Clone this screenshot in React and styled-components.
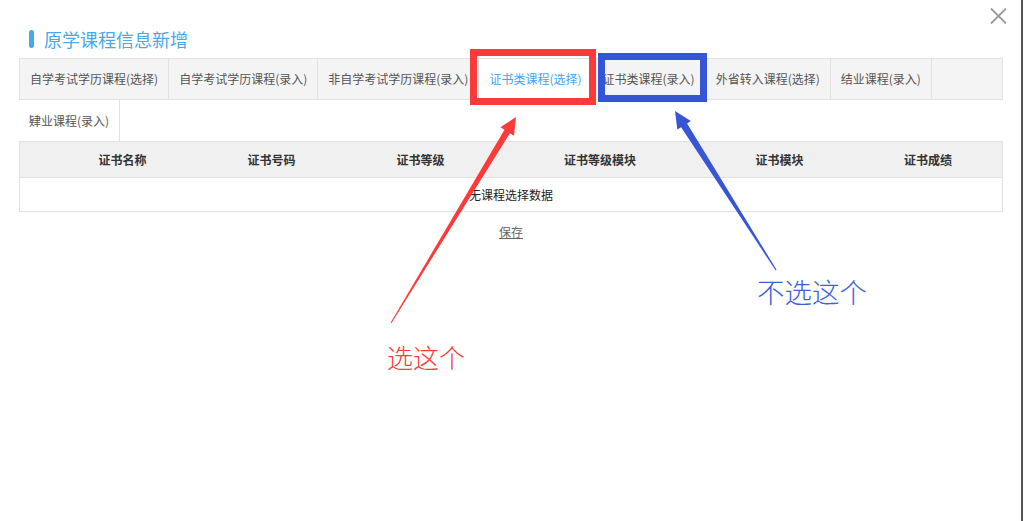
import React from "react";
import styled, { createGlobalStyle } from "styled-components";

const Global = createGlobalStyle`
  html, body { margin: 0; padding: 0; background: #fff; overflow: hidden; }
  body { font-family: "Microsoft YaHei", "Noto Sans CJK SC", "Noto Sans", sans-serif; }
  * { box-sizing: border-box; }
`;

const Frame = styled.div`
  position: relative;
  width: 1023px;
  height: 521px;
  border-right: 2px solid #555;
  padding: 28px 18px 0 19px;
  background: #fff;
`;

const Close = styled.button`
  position: absolute;
  top: 7px;
  right: 14px;
  width: 18px;
  height: 18px;
  padding: 0;
  border: 0;
  background: none;
  display: flex;
  align-items: center;
  justify-content: center;
`;

const Title = styled.h2`
  display: flex;
  align-items: center;
  gap: 10px;
  margin: 0 0 8px 10px;
  height: 22px;
  font-size: 18px;
  line-height: 22px;
  font-weight: 400;
  color: #4aa8e8;
  &::before {
    content: "";
    width: 5px;
    height: 18px;
    border-radius: 3px;
    background: #4aa8e8;
  }
`;

const TabStrip = styled.ul`
  display: flex;
  margin: 0;
  padding: 0;
  list-style: none;
  height: ${(p) => (p.$strip ? "42px" : "41px")};
  background: ${(p) => (p.$strip ? "#f4f4f4" : "#fff")};
  border: ${(p) => (p.$strip ? "1px solid #e2e2e2" : "0")};
`;

const Tab = styled.li`
  height: ${(p) => (p.$tall ? "41px" : "40px")};
  line-height: ${(p) => (p.$tall ? "41px" : "40px")};
  padding: 0 10px;
  font-size: 12px;
  white-space: nowrap;
  color: ${(p) => (p.$active ? "#3fa6f0" : "#555")};
  background: ${(p) => (p.$active ? "#fff" : "transparent")};
  border-right: 1px solid #e2e2e2;
`;

const Table = styled.div`
  border: 1px solid #e2e2e2;
  font-size: 12px;
  color: #333;
`;

const HeadRow = styled.div`
  display: grid;
  grid-template-columns: 28px 149px 149px 149px 210px 149px 1fr;
  height: 36px;
  background: #f0f0f0;
  border-bottom: 1px solid #e2e2e2;
`;

const HeadCell = styled.div`
  display: flex;
  align-items: center;
  justify-content: center;
  font-weight: 700;
  color: #333;
`;

const EmptyRow = styled.div`
  height: 33px;
  line-height: 33px;
  text-align: center;
  color: #222;
`;

const SaveLink = styled.a`
  display: block;
  width: fit-content;
  margin: 12px auto 0;
  font-size: 12px;
  line-height: 15px;
  color: #666;
  text-decoration: underline;
`;

const MarkBox = styled.div`
  position: absolute;
  left: ${(p) => p.$x}px;
  top: ${(p) => p.$y}px;
  width: ${(p) => p.$w}px;
  height: ${(p) => p.$h}px;
  border: 7px solid ${(p) => p.$c};
  pointer-events: none;
`;

const Note = styled.div`
  position: absolute;
  left: ${(p) => p.$x}px;
  top: ${(p) => p.$y}px;
  font-size: ${(p) => p.$s}px;
  line-height: 1;
  font-weight: 300;
  color: ${(p) => p.$c};
  white-space: nowrap;
`;

const Overlay = styled.svg`
  position: absolute;
  left: 0;
  top: 0;
  pointer-events: none;
`;

const tabs = [
  "自学考试学历课程(选择)",
  "自学考试学历课程(录入)",
  "非自学考试学历课程(录入)",
  "证书类课程(选择)",
  "证书类课程(录入)",
  "外省转入课程(选择)",
  "结业课程(录入)",
];

const cols = ["", "证书名称", "证书号码", "证书等级", "证书等级模块", "证书模块", "证书成绩"];

export default function App() {
  return (
    <>
      <Global />
      <Frame>
        <Close aria-label="关闭">
          <svg width="17" height="16" viewBox="0 0 17 16">
            <path d="M1 0.5 L16 15.5 M16 0.5 L1 15.5" stroke="#9a9a9a" strokeWidth="1.8" fill="none" />
          </svg>
        </Close>
        <Title>原学课程信息新增</Title>
        <TabStrip $strip>
          {tabs.map((t, i) => (
            <Tab key={t} $active={i === 3}>
              {t}
            </Tab>
          ))}
        </TabStrip>
        <TabStrip>
          <Tab $tall>肄业课程(录入)</Tab>
        </TabStrip>
        <Table>
          <HeadRow>
            {cols.map((c, i) => (
              <HeadCell key={i}>{c}</HeadCell>
            ))}
          </HeadRow>
          <EmptyRow>无课程选择数据</EmptyRow>
        </Table>
        <SaveLink>保存</SaveLink>

        <MarkBox $x={470} $y={49} $w={126} $h={56} $c="#fc3a3a" />
        <MarkBox $x={598} $y={53} $w={109} $h={49} $c="#3554d6" />
        <Overlay width="1023" height="521" viewBox="0 0 1023 521">
          <polygon
            points="390.6,322.7 504.5,129.8 500.4,127.3 516,117 514,135.7 509.9,133.2 391.4,323.3"
            fill="#fc3a3a"
          />
          <polygon
            points="775.5,270.3 681.1,127.2 677.3,129.6 675,111 690.9,121 687.1,123.4 776.5,269.7"
            fill="#3656d6"
          />
        </Overlay>
        <Note $x={387} $y={344} $s={26} $c="#f53b3b">选这个</Note>
        <Note $x={757} $y={278} $s={27.5} $c="#3d5ed8">不选这个</Note>
      </Frame>
    </>
  );
}
